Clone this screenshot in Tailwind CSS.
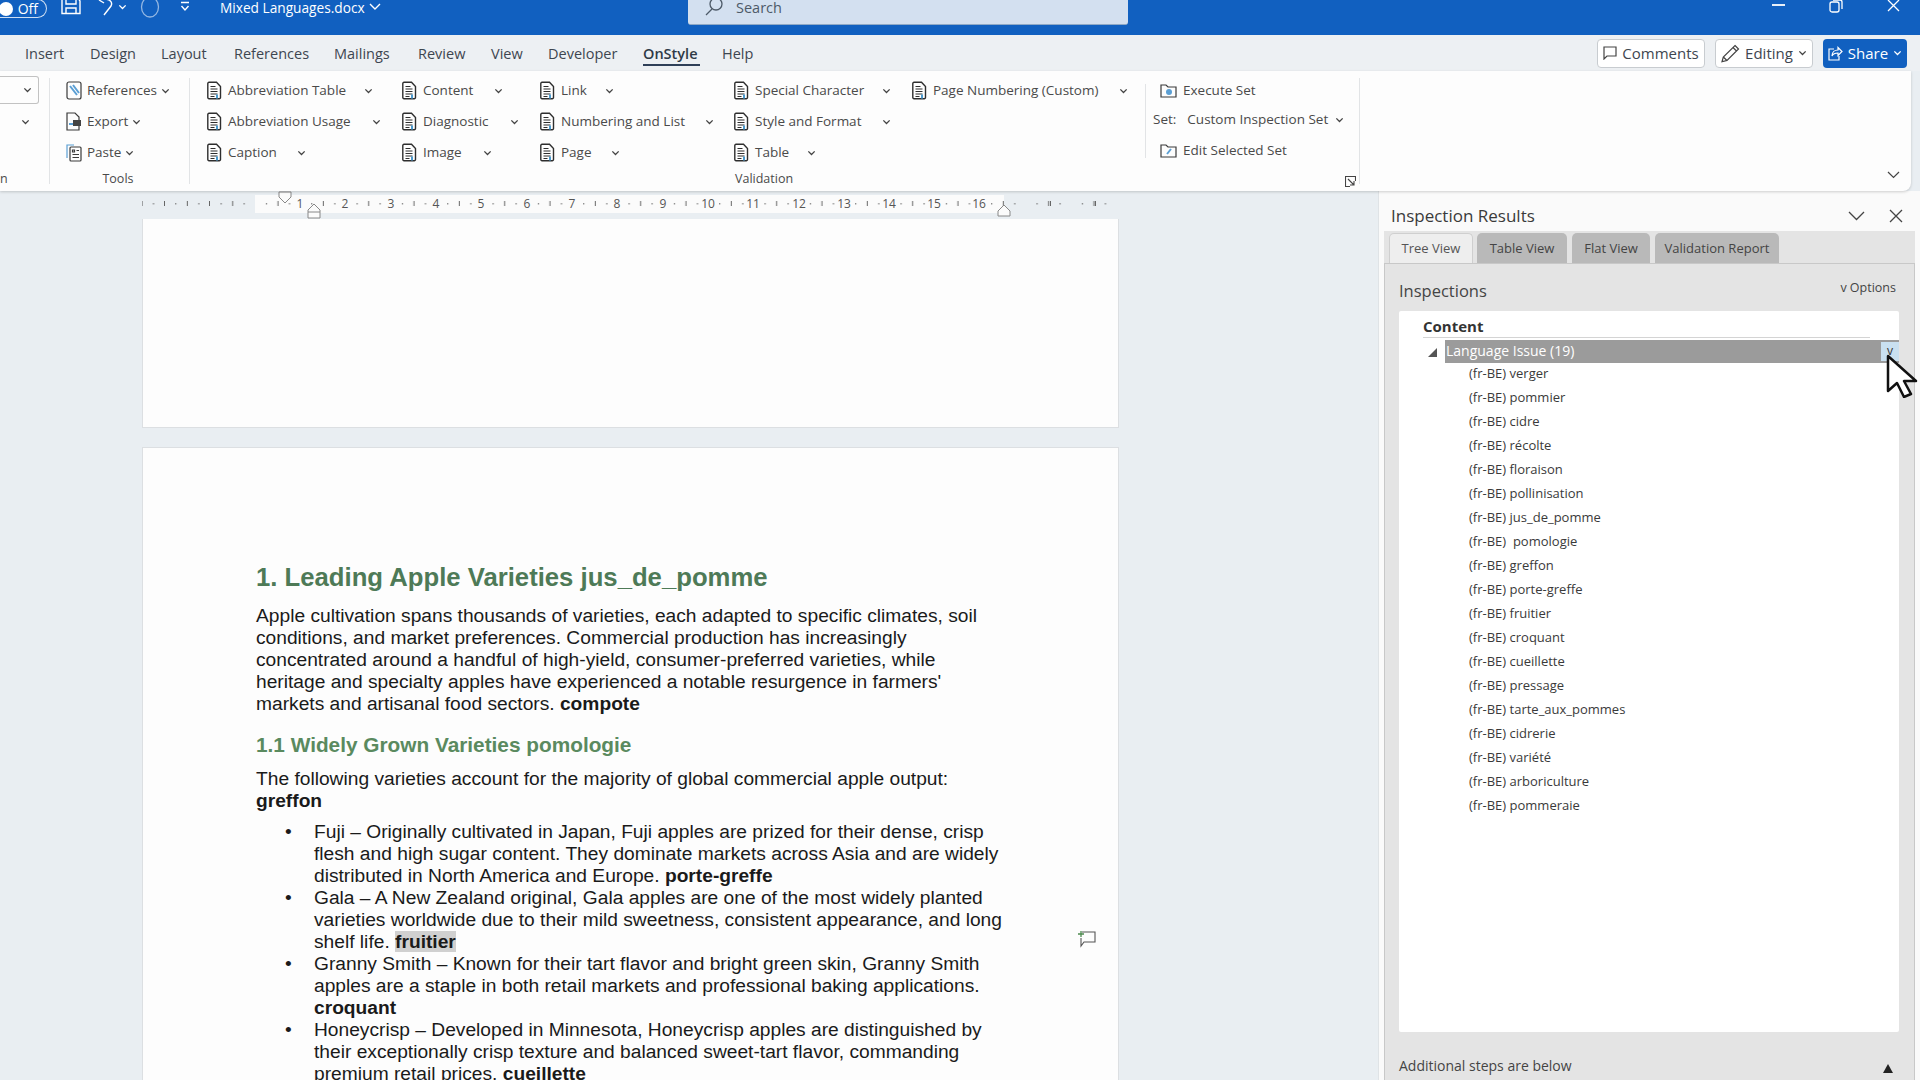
<!DOCTYPE html>
<html>
<head>
<meta charset="utf-8">
<script src="https://cdn.jsdelivr.net/npm/@tailwindcss/browser@4"></script>
</head>
<body class="m-0 bg-[#e9eef2]">
<svg class="hidden">
  <symbol id="doc" viewBox="0 0 15 18"><path d="M2 .8h7.5L13.5 5v11a1.2 1.2 0 0 1-1.2 1.2H2A1.2 1.2 0 0 1 .8 16V2A1.2 1.2 0 0 1 2 .8z" fill="#fff" stroke="#2e2e2e" stroke-width="1.4"/><path d="M3.500 5h5M3.500 7.500h7M3.500 10h7M3.500 12.500h7M3.500 15h4" stroke="#2e2e2e" stroke-width="1.2"/><path d="M10 13v4" stroke="#4b9bd0" stroke-width="2"/></symbol>
  <symbol id="chev" viewBox="0 0 10 6"><path d="M1.500 1.200 5 4.600l3.500-3.400" fill="none" stroke="#444" stroke-width="1.500"/></symbol>
</svg>
<div class="relative w-[1920px] h-[1080px] overflow-hidden flex flex-col bg-[#e9eef2] text-[#444] font-['Open_Sans','Noto_Sans',sans-serif]">

  <!-- Title bar -->
  <div class="h-[35px] shrink-0 bg-[#1160c0] flex items-start text-white relative">
    <div class="w-[47px] h-[19px] -mt-px rounded-r-full border border-white/80 border-l-0 flex items-center justify-between pr-[8px] text-[14px]">
      <span class="w-[14px] h-[14px] rounded-full bg-white -ml-[1px]"></span><span class="leading-none">Off</span>
    </div>
    <svg class="ml-[14px] -mt-[2px]" width="20" height="18" viewBox="0 0 20 18" fill="none" stroke="#fff" stroke-width="1.4"><path d="M1 0v15.500h18V3l-2-3M5 0v6h10V0M5 16v-6h10v6"/></svg>
    <svg class="ml-[15px] -mt-[1px]" width="18" height="18" viewBox="0 0 18 18" fill="none" stroke="#fff" stroke-width="1.4"><path d="M7 0c7 0 10 3 8 7l-7 9"/><path d="M3 1l5 3"/></svg>
    <svg class="ml-[4px] mt-[4px]" width="9" height="6" viewBox="0 0 10 6" fill="none" stroke="#fff" stroke-width="1.500"><path d="M1.500 1.200 5 4.600l3.500-3.400"/></svg>
    <svg class="ml-[13px] -mt-[2px]" width="20" height="20" viewBox="0 0 20 20" fill="none" stroke="#ffffff" stroke-opacity=".55" stroke-width="1.3"><ellipse cx="10" cy="9" rx="8.500" ry="10"/></svg>
    <svg class="ml-[19px] mt-[1px]" width="12" height="12" viewBox="0 0 12 12" fill="none" stroke="#fff" stroke-width="1.4"><path d="M2 1.500h8M2.500 5l3.500 4 3.500-4"/></svg>
    <span class="ml-[29px] text-[13.7px] leading-[15px]">Mixed Languages.docx</span>
    <svg class="ml-[4px] mt-[3px]" width="12" height="8" viewBox="0 0 12 8" fill="none" stroke="#fff" stroke-width="1.4"><path d="M1 1l5 5 5-5"/></svg>
    <div class="absolute left-[688px] top-0 w-[440px] h-[25px] bg-[#d3e0f0] rounded-b-[3px] border-b border-[#8fa9c6] flex items-start text-[#4d5a68]">
      <svg class="ml-[16px] -mt-[2px]" width="20" height="18" viewBox="0 0 20 18" fill="none" stroke="#4d5a68" stroke-width="1.3"><circle cx="12" cy="6" r="6"/><path d="M8 11l-6 6"/></svg>
      <span class="ml-[12px] text-[14.5px] leading-[15px]">Search</span>
    </div>
    <div class="ml-auto flex items-start">
      <span class="w-[13px] h-[2px] bg-white/90 mt-[4px] mr-[44px]"></span>
      <svg class="-mt-[1px] mr-[44px]" width="14" height="14" viewBox="0 0 14 14" fill="none" stroke="#fff" stroke-width="1.3"><rect x="1" y="3" width="9" height="10" rx="2"/><path d="M4 1h7a2 2 0 0 1 2 2v7"/></svg>
      <svg class="-mt-[1px] mr-[20px]" width="13" height="13" viewBox="0 0 13 13" fill="none" stroke="#fff" stroke-width="1.3"><path d="M1 1l11 11M12 1 1 12"/></svg>
    </div>
  </div>

  <!-- Tab row -->
  <div class="h-[36px] shrink-0 bg-[#edf0f3] flex items-center pl-[25px] text-[14.5px] text-[#3e4650]">
    <span class="w-[65px] pt-[2px]">Insert</span>
    <span class="w-[71px] pt-[2px]">Design</span>
    <span class="w-[73px] pt-[2px]">Layout</span>
    <span class="w-[100px] pt-[2px]">References</span>
    <span class="w-[84px] pt-[2px]">Mailings</span>
    <span class="w-[73px] pt-[2px]">Review</span>
    <span class="w-[57px] pt-[2px]">View</span>
    <span class="w-[95px] pt-[2px]">Developer</span>
    <span class="w-[79px] pt-[2px] relative font-semibold text-[#2f3a46]">OnStyle<span class="absolute left-0 top-[23px] w-[57px] h-[2px] bg-[#2f4058]"></span></span>
    <span class="pt-[2px]">Help</span>
    <div class="ml-auto mr-[13px] flex items-center gap-[10px] text-[15px]">
      <div class="w-[108px] h-[29px] bg-white border border-[#c8ccd0] rounded-[4px] flex items-center justify-center gap-[5px]">
        <svg width="14" height="14" viewBox="0 0 14 14" fill="none" stroke="#444" stroke-width="1.2"><path d="M1 1h12v9H4l-3 3z"/></svg><span>Comments</span>
      </div>
      <div class="w-[98px] h-[29px] bg-white border border-[#c8ccd0] rounded-[4px] flex items-center justify-center gap-[5px]">
        <svg width="19" height="19" viewBox="0 0 19 19" fill="none" stroke="#444" stroke-width="1.2"><path d="M14 1.500l3.500 3.500L6 16.500l-5 1.200L2.300 13zM12 3.500l3.500 3.500M2.300 13 6 16.500"/></svg><span>Editing</span>
        <svg width="9" height="6"><use href="#chev"/></svg>
      </div>
      <div class="w-[84px] h-[29px] bg-[#1160c0] text-white rounded-[4px] flex items-center justify-center gap-[5px]">
        <svg width="15" height="15" viewBox="0 0 15 15" fill="none" stroke="#fff" stroke-width="1.2"><path d="M6 3H1v11h10v-4M4 10c0-4 3-6 6-6V1.500l4 4-4 4V7c-3 0-5 1-6 3z"/></svg><span>Share</span>
        <svg width="9" height="6" viewBox="0 0 10 6" fill="none" stroke="#fff" stroke-width="1.500"><path d="M1.500 1.200 5 4.600l3.500-3.400"/></svg>
      </div>
    </div>
  </div>

  <!-- Ribbon -->
  <div class="h-[120px] shrink-0 w-[1911px] bg-[#fdfdfd] rounded-br-lg shadow-[0_1px_3px_rgba(0,0,0,0.18)] flex text-[13.5px] relative z-10 text-[#4a4a4a]">
    <!-- partial group -->
    <div class="w-[50px] border-r border-[#e2e4e6] my-[7px] flex flex-col relative">
      <div class="w-[39px] h-[28px] -mt-[2px] border border-[#c2c2c2] border-l-0 rounded-r-[3px] flex items-center justify-end pr-[6px]"><svg width="9" height="6"><use href="#chev"/></svg></div>
      <div class="h-[31px] mt-[2px] flex items-center pl-[21px]"><svg width="9" height="6"><use href="#chev"/></svg></div>
      <span class="mt-auto text-[12.5px] leading-[16px] -mb-[3px]">n</span>
    </div>
    <!-- Tools -->
    <div class="w-[140px] border-r border-[#e2e4e6] my-[7px] flex flex-col">
      <div class="flex flex-col pl-[16px] -mt-[3px]">
        <div class="h-[31px] flex items-center"><svg class="w-[16px] h-[19px]" viewBox="0 0 16 19" fill="none" stroke="#3a3a3a" stroke-width="1.2"><rect x="1" y="1" width="14" height="17" rx="2"/><path d="M4 5l7 9M7 4l6 8" stroke="#5b9fd4" stroke-width="2"/></svg><span class="ml-[5px]">References</span><svg class="ml-[4px]" width="9" height="6"><use href="#chev"/></svg></div>
        <div class="h-[31px] flex items-center"><svg class="w-[16px] h-[19px]" viewBox="0 0 16 19" fill="none" stroke="#3a3a3a" stroke-width="1.2"><path d="M1 1h8l4 4v13H1z"/><rect x="7" y="8" width="8" height="6" fill="#444" stroke="none"/><path d="M3 12h4" stroke="#5b9fd4" stroke-width="2"/></svg><span class="ml-[5px]">Export</span><svg class="ml-[4px]" width="9" height="6"><use href="#chev"/></svg></div>
        <div class="h-[31px] flex items-center"><svg class="w-[16px] h-[19px]" viewBox="0 0 16 19" fill="none" stroke="#3a3a3a" stroke-width="1.2"><path d="M1 15V2h7" stroke="#5b9fd4"/><rect x="4" y="4" width="11" height="14" rx="1"/><path d="M6.500 7h2v2h-2zM10.500 7.500h2.500M6.500 11.500h6.500M6.500 14.500h6.500"/></svg><span class="ml-[5px]">Paste</span><svg class="ml-[4px]" width="9" height="6"><use href="#chev"/></svg></div>
      </div>
      <span class="mt-auto text-center text-[12.5px] leading-[16px] -mb-[3px] -ml-[3px]">Tools</span>
    </div>
    <!-- Validation -->
    <div class="w-[1170px] border-r border-[#e2e4e6] my-[7px] flex flex-col">
      <div class="flex -mt-[3px] h-[93px]">
        <div class="w-[195px] pl-[17px] flex flex-col">
          <div class="h-[31px] flex items-center"><svg width="15" height="19"><use href="#doc"/></svg><span class="ml-[6px] w-[136px]">Abbreviation Table</span><svg width="9" height="6"><use href="#chev"/></svg></div>
          <div class="h-[31px] flex items-center"><svg width="15" height="19"><use href="#doc"/></svg><span class="ml-[6px] w-[144px] shrink-0">Abbreviation Usage</span><svg width="9" height="6"><use href="#chev"/></svg></div>
          <div class="h-[31px] flex items-center"><svg width="15" height="19"><use href="#doc"/></svg><span class="ml-[6px] w-[69px]">Caption</span><svg width="9" height="6"><use href="#chev"/></svg></div>
        </div>
        <div class="w-[155px] pl-[17px] flex flex-col">
          <div class="h-[31px] flex items-center"><svg width="15" height="19"><use href="#doc"/></svg><span class="ml-[6px] w-[71px]">Content</span><svg width="9" height="6"><use href="#chev"/></svg></div>
          <div class="h-[31px] flex items-center"><svg width="15" height="19"><use href="#doc"/></svg><span class="ml-[6px] w-[87px] shrink-0">Diagnostic</span><svg width="9" height="6"><use href="#chev"/></svg></div>
          <div class="h-[31px] flex items-center"><svg width="15" height="19"><use href="#doc"/></svg><span class="ml-[6px] w-[60px]">Image</span><svg width="9" height="6"><use href="#chev"/></svg></div>
        </div>
        <div class="w-[194px] flex flex-col">
          <div class="h-[31px] flex items-center"><svg width="15" height="19"><use href="#doc"/></svg><span class="ml-[6px] w-[44px]">Link</span><svg width="9" height="6"><use href="#chev"/></svg></div>
          <div class="h-[31px] flex items-center"><svg width="15" height="19"><use href="#doc"/></svg><span class="ml-[6px] w-[144px] shrink-0">Numbering and List</span><svg width="9" height="6"><use href="#chev"/></svg></div>
          <div class="h-[31px] flex items-center"><svg width="15" height="19"><use href="#doc"/></svg><span class="ml-[6px] w-[50px]">Page</span><svg width="9" height="6"><use href="#chev"/></svg></div>
        </div>
        <div class="w-[178px] flex flex-col">
          <div class="h-[31px] flex items-center"><svg width="15" height="19"><use href="#doc"/></svg><span class="ml-[6px] w-[127px] shrink-0">Special Character</span><svg width="9" height="6"><use href="#chev"/></svg></div>
          <div class="h-[31px] flex items-center"><svg width="15" height="19"><use href="#doc"/></svg><span class="ml-[6px] w-[127px] shrink-0">Style and Format</span><svg width="9" height="6"><use href="#chev"/></svg></div>
          <div class="h-[31px] flex items-center"><svg width="15" height="19"><use href="#doc"/></svg><span class="ml-[6px] w-[52px]">Table</span><svg width="9" height="6"><use href="#chev"/></svg></div>
        </div>
        <div class="w-[233px] flex flex-col">
          <div class="h-[31px] flex items-center"><svg width="15" height="19"><use href="#doc"/></svg><span class="ml-[6px] w-[186px] shrink-0">Page Numbering (Custom)</span><svg width="9" height="6"><use href="#chev"/></svg></div>
        </div>
        <div class="w-px h-[74px] mt-[9px] bg-[#e2e4e6]"></div>
        <div class="pl-[13px] flex flex-col">
          <div class="h-[31px] flex items-center"><svg class="ml-[1px]" width="17" height="15" viewBox="0 0 17 15" fill="none" stroke="#3a3a3a" stroke-width="1.2"><path d="M1 2h5l2 2h8v10H1z"/><circle cx="9" cy="9" r="3" fill="#5b9fd4" stroke="none"/></svg><span class="ml-[6px]">Execute Set</span></div>
          <div class="h-[27px] flex items-center -ml-[6px]"><span>Set:</span><span class="ml-[11px] w-[148px] shrink-0 whitespace-nowrap">Custom Inspection Set</span><svg width="9" height="6"><use href="#chev"/></svg></div>
          <div class="h-[35px] flex items-center"><svg class="ml-[1px]" width="17" height="15" viewBox="0 0 17 15" fill="none" stroke="#3a3a3a" stroke-width="1.2"><path d="M1 2h5l2 2h8v10H1z"/><path d="M7 11l4-5" stroke="#5b9fd4" stroke-width="2"/></svg><span class="ml-[6px]">Edit Selected Set</span></div>
        </div>
      </div>
      <div class="mt-auto flex items-end pl-[545px] -mb-[3px]">
        <span class="text-[12.5px] leading-[16px]">Validation</span>
        <svg class="ml-auto mr-[3px]" width="11" height="11" viewBox="0 0 11 11" fill="none" stroke="#444" stroke-width="1.1"><path d="M10.500 5V.5H.5v10H5M3 3l6 6M9 5v4H5"/></svg>
      </div>
    </div>
    <svg class="absolute right-[11px] bottom-[12px]" width="13" height="8" viewBox="0 0 13 8" fill="none" stroke="#444" stroke-width="1.2"><path d="M1 1l5.500 5.500L12 1"/></svg>
  </div>

  <!-- Main -->
  <div class="flex-1 flex min-h-0">
    <!-- Document -->
    <div class="w-[1378px] shrink-0 flex flex-col min-h-0 overflow-hidden">
      <svg class="block shrink-0" width="1378" height="28" viewBox="0 0 1378 28">
        <defs><pattern id="rt" x="255" y="0" width="45.33" height="28" patternUnits="userSpaceOnUse"><rect x="11" y="12" width="1" height="1.500" fill="#666"/><rect x="22.500" y="10" width="1" height="5" fill="#666"/><rect x="34" y="12" width="1" height="1.500" fill="#666"/></pattern></defs>
        <rect x="255" y="4" width="749" height="18" fill="#fbfbfb"/>
        <rect x="142" y="4" width="976" height="18" fill="url(#rt)"/>
        <path d="M164.500 10v5M209.500 10v5M1050.500 10v5M1095.500 10v5" stroke="#666"/>
        <g font-family="Open Sans, sans-serif" font-size="12" fill="#555" text-anchor="middle">
          <text x="300" y="17">1</text><text x="345" y="17">2</text><text x="391" y="17">3</text><text x="436" y="17">4</text><text x="481" y="17">5</text><text x="527" y="17">6</text><text x="572" y="17">7</text><text x="617" y="17">8</text><text x="663" y="17">9</text><text x="708" y="17">10</text><text x="753" y="17">11</text><text x="799" y="17">12</text><text x="844" y="17">13</text><text x="889" y="17">14</text><text x="934" y="17">15</text><text x="979" y="17">16</text>
        </g>
        <path d="M279 1h12v5l-6 6-6-6z" fill="#fbfbfb" stroke="#888"/>
        <path d="M314 13l6 6v8h-12v-8z" fill="#fbfbfb" stroke="#888"/><path d="M308 21h12" stroke="#888"/>
        <path d="M1004 14l6 6v5h-12v-5z" fill="#fbfbfb" stroke="#888"/>
      </svg>
      <div class="ml-[142px] w-[977px] h-[209px] shrink-0 bg-[#fdfdfd] border border-t-0 border-[#dcdfe2]"></div>
      <div class="mt-[19px] ml-[142px] w-[977px] flex-1 shrink-0 bg-[#fdfdfd] border border-b-0 border-[#dcdfe2] pt-[114px] pl-[113px] relative font-['Liberation_Sans',Arial,sans-serif] text-[19.2px] leading-[22px] text-[#1a1a1a] whitespace-nowrap">
        <h1 class="text-[25.7px] leading-[30px] font-bold text-[#4e7a57]">1. Leading Apple Varieties jus_de_pomme</h1>
        <p class="mt-[13px]">Apple cultivation spans thousands of varieties, each adapted to specific climates, soil<br>conditions, and market preferences. Commercial production has increasingly<br>concentrated around a handful of high-yield, consumer-preferred varieties, while<br>heritage and specialty apples have experienced a notable resurgence in farmers'<br>markets and artisanal food sectors. <b>compote</b></p>
        <h2 class="mt-[17px] text-[20.8px] leading-[26px] font-bold text-[#5a8a5f]">1.1 Widely Grown Varieties pomologie</h2>
        <p class="mt-[10px]">The following varieties account for the majority of global commercial apple output:<br><b>greffon</b></p>
        <ul class="mt-[9px]">
          <li class="flex"><span class="w-[58px] pl-[29px]">•</span><span>Fuji – Originally cultivated in Japan, Fuji apples are prized for their dense, crisp<br>flesh and high sugar content. They dominate markets across Asia and are widely<br>distributed in North America and Europe. <b>porte-greffe</b></span></li>
          <li class="flex"><span class="w-[58px] pl-[29px]">•</span><span>Gala – A New Zealand original, Gala apples are one of the most widely planted<br>varieties worldwide due to their mild sweetness, consistent appearance, and long<br>shelf life. <b class="bg-[#d0d0d0]">fruitier</b></span></li>
          <li class="flex"><span class="w-[58px] pl-[29px]">•</span><span>Granny Smith – Known for their tart flavor and bright green skin, Granny Smith<br>apples are a staple in both retail markets and professional baking applications.<br><b>croquant</b></span></li>
          <li class="flex"><span class="w-[58px] pl-[29px]">•</span><span>Honeycrisp – Developed in Minnesota, Honeycrisp apples are distinguished by<br>their exceptionally crisp texture and balanced sweet-tart flavor, commanding<br>premium retail prices. <b>cueillette</b></span></li>
        </ul>
        <svg class="absolute left-[934px] top-[482px]" width="19" height="18" viewBox="0 0 19 18" fill="none" stroke="#555" stroke-width="1.1"><path d="M5 2h13v10H7l-3 4v-8"/><path d="M1 4h6M4 1v6" stroke="#4d8a4f" stroke-width="1.300"/></svg>
      </div>
    </div>

    <!-- Pane -->
    <div class="flex-1 min-w-0 bg-[#fafafa] border-l border-[#dfe3e6] flex flex-col">
      <div class="h-[40px] shrink-0 flex items-center pt-[10px] pl-[12px] pr-[17px]">
        <span class="text-[17px] font-medium text-[#3a3a3a]">Inspection Results</span>
        <svg class="ml-auto mr-[24px]" width="17" height="10" viewBox="0 0 17 10" fill="none" stroke="#444" stroke-width="1.3"><path d="M1 1l7.500 7.500L16 1"/></svg>
        <svg width="14" height="14" viewBox="0 0 14 14" fill="none" stroke="#444" stroke-width="1.3"><path d="M1 1l12 12M13 1 1 13"/></svg>
      </div>
      <div class="ml-[5px] w-[531px] flex-1 min-h-0 flex flex-col bg-[#e4e4e4] text-[#444]">
        <div class="h-[32px] shrink-0 flex items-end pl-[5px] text-[13px]">
          <div class="w-[84px] h-[30px] pt-[1px] bg-[#eeeeee] border border-b-0 border-[#cfcfcf] rounded-t-[5px] flex items-center justify-center text-[#555]">Tree View</div>
          <div class="ml-[4px] w-[90px] h-[30px] pt-[1px] bg-[#b9b9b9] rounded-t-[5px] flex items-center justify-center">Table View</div>
          <div class="ml-[5px] w-[78px] h-[30px] pt-[1px] bg-[#b9b9b9] rounded-t-[5px] flex items-center justify-center">Flat View</div>
          <div class="ml-[5px] w-[124px] h-[30px] pt-[1px] bg-[#b9b9b9] rounded-t-[5px] flex items-center justify-center">Validation Report</div>
        </div>
        <div class="flex-1 min-h-0 border border-b-0 border-[#c8c8c8] flex flex-col">
          <div class="h-[47px] shrink-0 flex items-center pl-[14px] pr-[18px]">
            <span class="text-[16.5px] mt-[7px]">Inspections</span>
            <span class="ml-auto mt-[2px] text-[12.5px]">v Options</span>
          </div>
          <div class="relative ml-[14px] w-[500px] h-[721px] shrink-0 bg-white rounded-[2px]">
            <div class="ml-[24px] w-[447px] h-[27px] border-b border-[#d4d4d4] font-bold text-[15px] leading-[31px] text-[#333]">Content</div>
            <div class="mt-[2px] ml-[46px] h-[23px] bg-[#9b9b9b] text-white text-[14px] leading-[22px] relative pl-[1px] font-medium">
              Language Issue (19)
              <span class="absolute left-[436px] top-[2px] w-[18px] h-[19px] bg-[#c9e0f0] text-[#333] text-[12px] leading-[18px] text-center">v</span>
            </div>
            <div class="absolute left-[29px] top-[37px] w-0 h-0 border-l-[9px] border-l-transparent border-b-[9px] border-b-[#555]"></div>
            <ul class="ml-[70px] -mt-[2px] text-[13px] leading-[24px] text-[#3a3a3a]">
              <li>(fr-BE) verger</li>
              <li>(fr-BE) pommier</li>
              <li>(fr-BE) cidre</li>
              <li>(fr-BE) récolte</li>
              <li>(fr-BE) floraison</li>
              <li>(fr-BE) pollinisation</li>
              <li>(fr-BE) jus_de_pomme</li>
              <li>(fr-BE)&nbsp; pomologie</li>
              <li>(fr-BE) greffon</li>
              <li>(fr-BE) porte-greffe</li>
              <li>(fr-BE) fruitier</li>
              <li>(fr-BE) croquant</li>
              <li>(fr-BE) cueillette</li>
              <li>(fr-BE) pressage</li>
              <li>(fr-BE) tarte_aux_pommes</li>
              <li>(fr-BE) cidrerie</li>
              <li>(fr-BE) variété</li>
              <li>(fr-BE) arboriculture</li>
              <li>(fr-BE) pommeraie</li>
            </ul>
          </div>
          <div class="flex-1 flex items-center pl-[14px] pr-[21px] pt-[18px] text-[14px]">
            <span>Additional steps are below</span>
            <span class="ml-auto w-0 h-0 border-x-[5px] border-x-transparent border-b-[9px] border-b-[#222] mt-[6px]"></span>
          </div>
        </div>
      </div>
    </div>
  </div>

  <!-- Mouse cursor -->
  <svg class="absolute left-[1886px] top-[354px] z-20" width="32" height="44" viewBox="0 0 32 44"><path d="M2 2v35l9-8 7 14 7-3-7-13h12z" fill="#fff" stroke="#111" stroke-width="2.500" stroke-linejoin="round"/></svg>
</div>
</body>
</html>
